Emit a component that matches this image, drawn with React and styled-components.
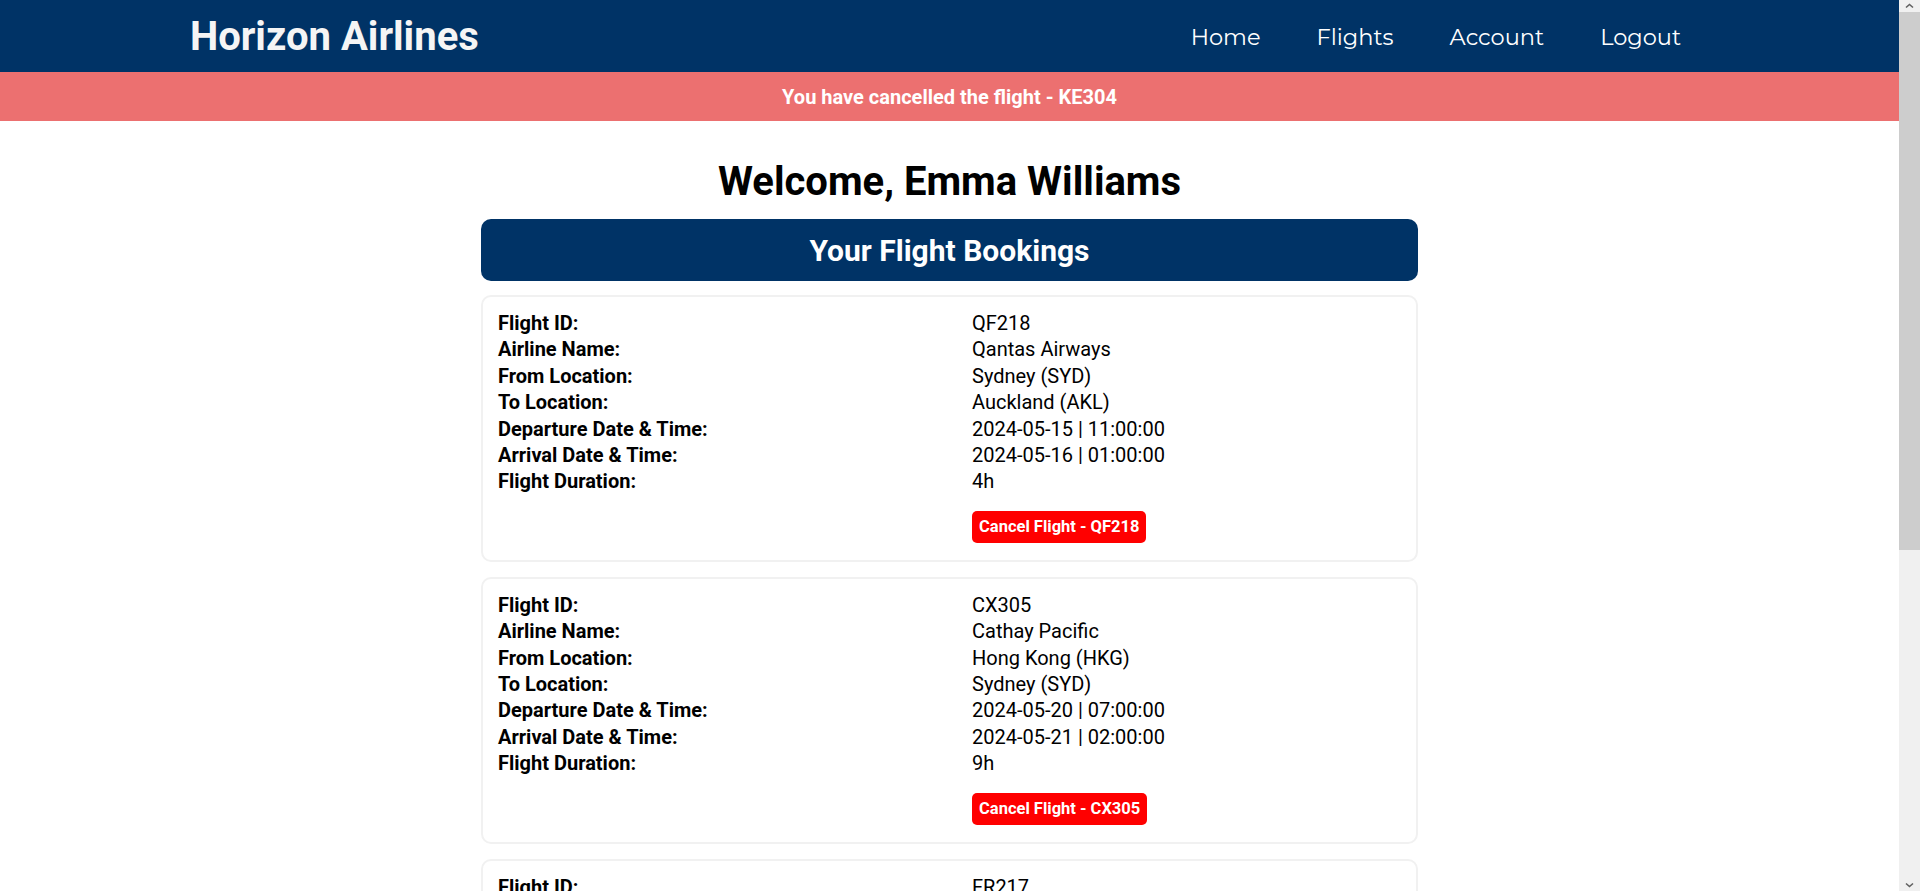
import React from 'react'
import styled, { createGlobalStyle } from 'styled-components'

const bookings = [
    { id: 'QF218', airline: 'Qantas Airways', from: 'Sydney (SYD)', to: 'Auckland (AKL)', dep: '2024-05-15 | 11:00:00', arr: '2024-05-16 | 01:00:00', duration: '4h' },
    { id: 'CX305', airline: 'Cathay Pacific', from: 'Hong Kong (HKG)', to: 'Sydney (SYD)', dep: '2024-05-20 | 07:00:00', arr: '2024-05-21 | 02:00:00', duration: '9h' },
    { id: 'FR217', airline: 'Ryanair', from: 'Dublin (DUB)', to: 'London (STN)', dep: '2024-05-24 | 09:30:00', arr: '2024-05-24 | 10:45:00', duration: '1h' },
    { id: 'SQ232', airline: 'Singapore Airlines', from: 'Singapore (SIN)', to: 'Sydney (SYD)', dep: '2024-06-02 | 08:00:00', arr: '2024-06-02 | 18:00:00', duration: '8h' },
]

const Chevron = ({ down }) => (
    <svg width = "9" height = "6" viewBox = "0 0 9 6">
        <path d = { down ? 'M1 1.5 L4.5 4.5 L8 1.5' : 'M1 4.5 L4.5 1.5 L8 4.5' } fill = "none" stroke = "#606060" strokeWidth = "1.6"/>
    </svg>
)

const App = () => {
    return(
        <div>
            <GlobalStyle/>
            <Nav>
                <Brand>Horizon Airlines</Brand>
                <Links>
                    <NavLink href = "#">Home</NavLink>
                    <NavLink href = "#">Flights</NavLink>
                    <NavLink href = "#">Account</NavLink>
                    <NavLink href = "#">Logout</NavLink>
                </Links>
            </Nav>
            <Banner>You have cancelled the flight - KE304</Banner>
            <Main>
                <Welcome>Welcome, Emma Williams</Welcome>
                <SectionHeader>Your Flight Bookings</SectionHeader>
                <List>
                    { bookings.map(b => (
                        <Card key = {b.id}>
                            <Label>Flight ID:</Label><Value>{b.id}</Value>
                            <Label>Airline Name:</Label><Value>{b.airline}</Value>
                            <Label>From Location:</Label><Value>{b.from}</Value>
                            <Label>To Location:</Label><Value>{b.to}</Value>
                            <Label>Departure Date &amp; Time:</Label><Value>{b.dep}</Value>
                            <Label>Arrival Date &amp; Time:</Label><Value>{b.arr}</Value>
                            <Label>Flight Duration:</Label><Value>{b.duration}</Value>
                            <Actions>
                                <CancelButton>Cancel Flight - {b.id}</CancelButton>
                            </Actions>
                        </Card>
                    )) }
                </List>
            </Main>
            <ScrollBar>
                <ScrollArrow><Chevron/></ScrollArrow>
                <ScrollThumb/>
                <ScrollTrack/>
                <ScrollArrow><Chevron down/></ScrollArrow>
            </ScrollBar>
        </div>
    )
}

const GlobalStyle = createGlobalStyle`
    html {
        scrollbar-width: none;
    }
    ::-webkit-scrollbar {
        display: none;
    }
    body {
        margin: 0 21px 0 0;
        background: #fff;
        color: #000;
        font-family: Roboto, "Liberation Sans", Arial, sans-serif;
    }
`
const Nav = styled.nav`
    box-sizing: border-box;
    height: 72px;
    padding: 0 10%;
    background: #003366;
    display: flex;
    align-items: center;
    justify-content: space-between;
`
const Brand = styled.div`
    color: #f5f5f5;
    font-size: 40px;
    font-weight: 700;
`
const Links = styled.div`
    display: flex;
    padding-top: 2px;
`
const NavLink = styled.a`
    padding: 0 28px;
    color: #fff;
    text-decoration: none;
    font-family: Montserrat, "Open Sans", sans-serif;
    font-size: 22.5px;
`
const Banner = styled.div`
    height: 49px;
    background: #ec7070;
    color: #fff;
    font-size: 20px;
    font-weight: 700;
    display: flex;
    align-items: center;
    justify-content: center;
`
const Main = styled.main`
    width: 937px;
    margin: 0 auto;
    padding-bottom: 32px;
`
const Welcome = styled.h1`
    margin: 37px 0 14px;
    text-align: center;
    font-size: 40px;
    font-weight: 700;
    line-height: normal;
`
const SectionHeader = styled.h2`
    margin: 0;
    height: 62px;
    border-radius: 10px;
    background: #003366;
    color: #fff;
    font-size: 30px;
    font-weight: 700;
    display: flex;
    align-items: center;
    justify-content: center;
`
const List = styled.div`
    margin-top: 14px;
    display: flex;
    flex-direction: column;
    gap: 15px;
`
const Card = styled.div`
    border: 2px solid #f1f1f1;
    border-radius: 10px;
    padding: 13px 15px 17px;
    display: grid;
    grid-template-columns: 474px 1fr;
    font-size: 20px;
    line-height: 26.4px;
`
const Label = styled.div`
    font-weight: 700;
`
const Value = styled.div`
    font-weight: 400;
`
const Actions = styled.div`
    grid-column: 2;
    margin-top: 16px;
    display: flex;
`
const CancelButton = styled.button`
    height: 32px;
    padding: 0 7px;
    border: none;
    border-radius: 5px;
    background: #ff0000;
    color: #fff;
    font-family: Roboto, "Liberation Sans", Arial, sans-serif;
    font-size: 16.5px;
    font-weight: 700;
    cursor: pointer;
`
const ScrollBar = styled.div`
    position: fixed;
    top: 0;
    right: 0;
    width: 21px;
    height: 100vh;
    background: #f0f0f0;
    display: flex;
    flex-direction: column;
`
const ScrollArrow = styled.div`
    height: 12px;
    display: flex;
    align-items: center;
    justify-content: center;
`
const ScrollThumb = styled.div`
    height: 538px;
    background: #cdcdcd;
`
const ScrollTrack = styled.div`
    flex: 1;
`

export default App
